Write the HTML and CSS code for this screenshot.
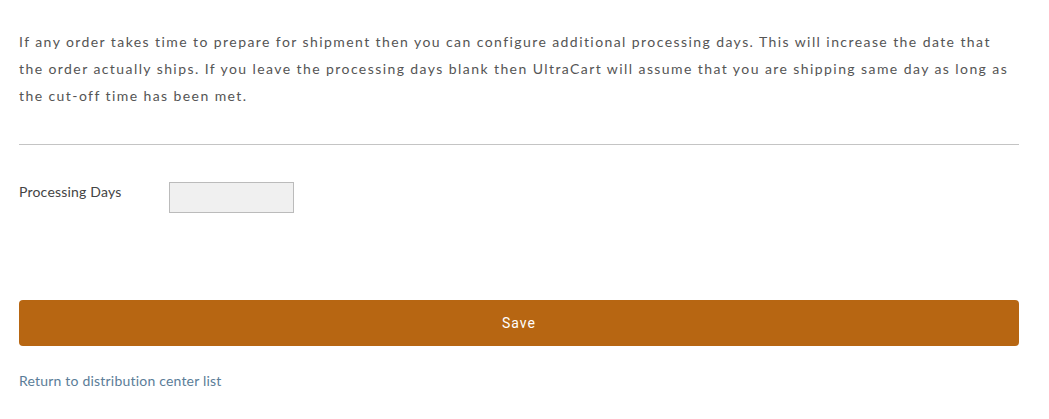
FILE: index.html
```html
<!DOCTYPE html>
<html>
<head>
    <meta charset="utf-8">
    <title>Processing Days</title>
    <link rel="stylesheet" href="styles.css">
</head>
<body>
    <div class="page">
        <p class="intro">If any order takes time to prepare for shipment then you can configure additional processing days. This will increase the date that the order actually ships. If you leave the processing days blank then UltraCart will assume that you are shipping same day as long as the cut-off time has been met.</p>
        <hr class="divider">
        <div class="field">
            <label for="processingDays" class="field-label">Processing Days</label>
            <input type="text" id="processingDays" class="field-input">
        </div>
        <button class="save">Save</button>
        <a href="#" class="back-link">Return to distribution center list</a>
    </div>
</body>
</html>
```

FILE: styles.css
```css
body {
    margin: 0;
    background: #fff;
    font-family: Lato, "Open Sans", sans-serif;
}
.page {
    width: 1000px;
    margin-left: 19px;
    padding-top: 28px;
}
.intro {
    margin: 0;
    font-size: 14px;
    line-height: 27px;
    letter-spacing: 1.42px;
    color: #555;
}
.divider {
    margin: 35px 0 0 0;
    border: 0;
    border-top: 1px solid #c4c4c4;
    height: 0;
}
.field {
    display: flex;
    align-items: flex-start;
    margin-top: 37px;
}
.field-label {
    width: 150px;
    font-size: 14px;
    line-height: 20px;
    letter-spacing: 0.2px;
    color: #444;
}
.field-input {
    box-sizing: border-box;
    width: 125px;
    height: 31px;
    margin: 0;
    background: #f0f0f0;
    border: 1px solid #bbb;
    outline: none;
}
.save {
    display: block;
    width: 100%;
    height: 46px;
    margin-top: 87px;
    border: 0;
    border-radius: 4px;
    background: #b76612;
    color: #fff;
    font-family: Roboto, sans-serif;
    font-size: 14px;
    letter-spacing: 1px;
}
.back-link {
    display: inline-block;
    margin-top: 26px;
    font-size: 14px;
    line-height: 17px;
    letter-spacing: 0.2px;
    color: #5b7d98;
    text-decoration: none;
}
```
